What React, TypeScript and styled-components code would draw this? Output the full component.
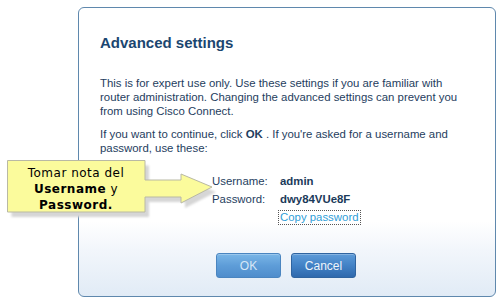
import React from "react";
import styled, { createGlobalStyle } from "styled-components";

const GlobalStyle = createGlobalStyle`
  html, body {
    margin: 0;
    padding: 0;
    background: #ffffff;
  }
  body {
    width: 502px;
    height: 305px;
    overflow: hidden;
    font-family: "Liberation Sans", Arial, sans-serif;
  }
`;

const Page = styled.div`
  position: relative;
  width: 502px;
  height: 305px;
  padding: 7px 0 0 78px;
  box-sizing: border-box;
`;

const Dialog = styled.div`
  box-sizing: border-box;
  width: 418px;
  height: 290px;
  border: 1px solid #5f88ad;
  border-radius: 6px;
  padding: 26px 20px 0 21px;
  background: linear-gradient(
    to bottom,
    #ffffff 0%,
    #ffffff 74%,
    #f2f6fb 84%,
    #e1ebf6 100%
  );
  color: #1e3d5e;
`;

const Title = styled.h1`
  margin: 0;
  font-size: 15px;
  line-height: 18px;
  font-weight: bold;
  color: #1b4670;
`;

const Text = styled.p<{ $gap: number }>`
  width: 364px;
  margin: ${(p) => p.$gap}px 0 0;
  font-size: 11.4px;
  line-height: 14px;
  color: #1e3d5e;
`;

const Credentials = styled.div`
  margin: 17px 0 0 112px;
  display: grid;
  grid-template-columns: 68px auto;
  grid-auto-rows: 18px;
  align-items: center;
  font-size: 11.4px;
  color: #1e3d5e;
`;

const Value = styled.span`
  font-weight: bold;
  color: #1b3a5a;
`;

const CopyLink = styled.a`
  grid-column: 2;
  justify-self: start;
  font-size: 11.4px;
  line-height: 13px;
  color: #2f9ed8;
  text-decoration: none;
  border: 1px dotted #555;
  padding: 0 1px;
  margin-left: -2px;
`;

const Buttons = styled.div`
  display: flex;
  justify-content: center;
  gap: 10px;
  margin: 27px 0 0 -3px;
`;

const Button = styled.button<{ $primary?: boolean }>`
  width: 65px;
  height: 25px;
  border-radius: 3px;
  font-family: "Liberation Sans", Arial, sans-serif;
  font-size: 12px;
  cursor: pointer;
  border: 1px solid ${(p) => (p.$primary ? "#4a85c0" : "#2f64a0")};
  background: ${(p) =>
    p.$primary
      ? "linear-gradient(to bottom, #7ab6e7 0%, #5e9dd8 50%, #4f8dcc 100%)"
      : "linear-gradient(to bottom, #5d9bd8 0%, #4282c6 50%, #2f69ad 100%)"};
  color: ${(p) => (p.$primary ? "#d6e7f6" : "#eef4fa")};
  box-shadow: inset 0 1px 0 rgba(255, 255, 255, 0.25);
`;

const Callout = styled.div`
  position: absolute;
  left: 7px;
  top: 160px;
  width: 210px;
  height: 66px;
`;

const CalloutShape = styled.svg`
  position: absolute;
  left: 0;
  top: 0;
`;

const CalloutText = styled.div`
  position: relative;
  box-sizing: border-box;
  width: 138px;
  height: 52px;
  padding-top: 5px;
  text-align: center;
  font-family: "DejaVu Sans", Verdana, sans-serif;
  font-size: 12px;
  line-height: 16px;
  letter-spacing: 0.5px;
  color: #000;

  b {
    font-weight: bold;
  }
`;

const calloutPath =
  "M0.5 0.5 H138 V20 H174 V14 L205 27 L174 43 V37 H138 V52 H0.5 Z";

const App = () => {
  return (
    <Page>
      <GlobalStyle />
      <Dialog>
        <Title>Advanced settings</Title>
        <Text $gap={24}>
          This is for expert use only. Use these settings if you are familiar with
          router administration. Changing the advanced settings can prevent you
          from using Cisco Connect.
        </Text>
        <Text $gap={9}>
          If you want to continue, click <b>OK</b> . If you're asked for a username and
          password, use these:
        </Text>
        <Credentials>
          <span>Username:</span>
          <Value>admin</Value>
          <span>Password:</span>
          <Value>dwy84VUe8F</Value>
          <CopyLink href="#">Copy password</CopyLink>
        </Credentials>
        <Buttons>
          <Button $primary>OK</Button>
          <Button>Cancel</Button>
        </Buttons>
      </Dialog>

      <Callout>
        <CalloutShape width="210" height="66" viewBox="0 0 210 66">
          <defs>
            <filter id="soft" x="-10%" y="-10%" width="120%" height="130%">
              <feGaussianBlur stdDeviation="0.8" />
            </filter>
          </defs>
          <path
            d={calloutPath}
            transform="translate(4 5)"
            fill="#d6d6d6"
            filter="url(#soft)"
          />
          <path d={calloutPath} fill="#fbfb9c" stroke="#b9b9a4" strokeWidth="1" />
        </CalloutShape>
        <CalloutText>
          Tomar nota del
          <br />
          <b>Username</b> y
          <br />
          <b>Password.</b>
        </CalloutText>
      </Callout>
    </Page>
  );
};

export default App;
